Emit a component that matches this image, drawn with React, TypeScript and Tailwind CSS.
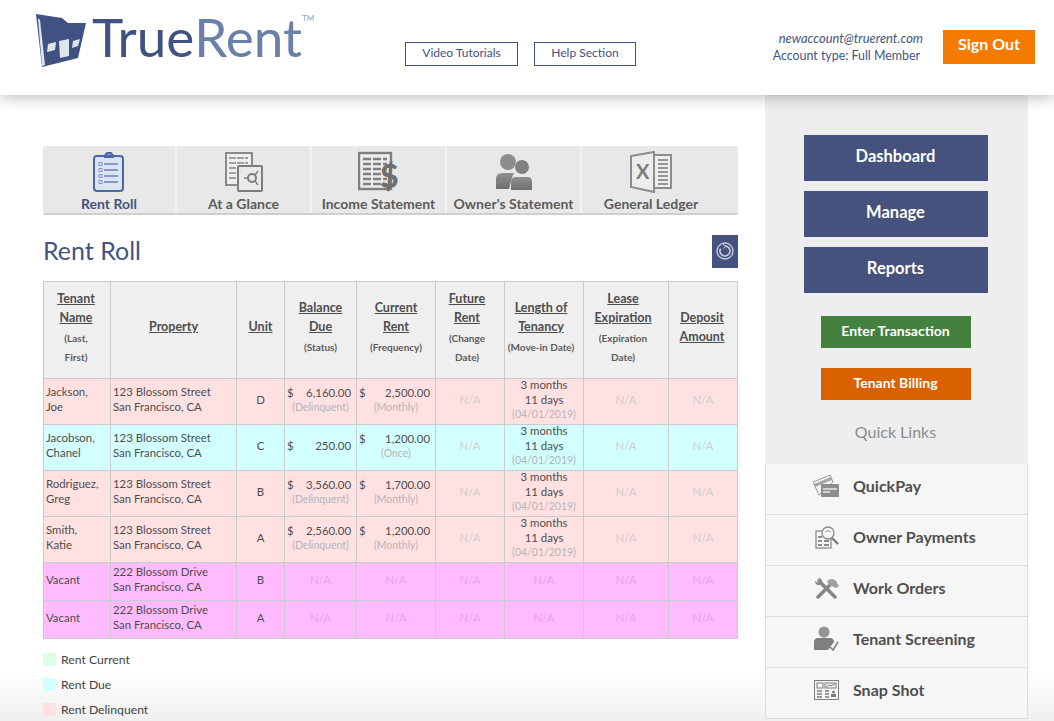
const font = "font-['Lato','Open_Sans',sans-serif]"

function LogoMark() {
  return (
    <svg width="50" height="54" viewBox="0 0 50 54" className="shrink-0">
      <path d="M0 0 L26 4 L32 9 L50 9 L42 44 L6 53 Z" fill="#3f5282" />
      <path d="M2 4 L4 6 L9 51 L6 52 Z" fill="#dfe5ee" />
      <path d="M12 30 L20 28 L19 36 L11 38 Z" fill="#dfe5ee" />
      <path d="M23 27 L33 25 L33 42 L24 44 Z" fill="#dfe5ee" />
      <path d="M37 27 L44 25 L42 32 L36 34 Z" fill="#dfe5ee" />
    </svg>
  )
}

function RentRollIcon() {
  return (
    <svg width="32" height="40" viewBox="0 0 32 40">
      <path d="M12 4 L14 1 H18 L20 4 H27 Q30 4 30 7 V36 Q30 39 27 39 H4 Q1 39 1 36 V7 Q1 4 4 4 Z" fill="#dde4f1" stroke="#4a68a8" strokeWidth="2" />
      <rect x="11" y="2.5" width="10" height="3.5" fill="#4a68a8" />
      {[12, 18, 24, 30].map((y) => (
        <g key={y}>
          <rect x="6" y={y - 1.5} width="3" height="3" fill="none" stroke="#6c86bb" strokeWidth="0.8" />
          <path d={`M11 ${y} H25`} stroke="#4a68a8" strokeWidth="1.2" />
        </g>
      ))}
    </svg>
  )
}

function GlanceIcon() {
  return (
    <svg width="38" height="40" viewBox="0 0 38 40">
      <rect x="1" y="1" width="26" height="32" fill="#eee" stroke="#8a8a8a" strokeWidth="2" />
      {[6, 11, 16, 21, 26].map((y) => (
        <path key={y} d={`M4 ${y} H23`} stroke="#a0a0a0" strokeWidth="2" strokeDasharray="7 1" />
      ))}
      <rect x="13" y="14" width="24" height="25" rx="1" fill="#e9e9e9" stroke="#7d7d7d" strokeWidth="2" />
      <circle cx="27" cy="26" r="4" fill="none" stroke="#7d7d7d" strokeWidth="2" />
      <path d="M19 26 H23 M30 23 L33 19 M30 29 L33 33" stroke="#7d7d7d" strokeWidth="1.5" />
    </svg>
  )
}

function IncomeIcon() {
  return (
    <svg width="42" height="46" viewBox="0 0 42 46">
      <g transform="translate(0 3)">
        <rect x="1" y="1" width="32" height="36" fill="#ececec" stroke="#7f7f7f" strokeWidth="2.4" />
        {[7, 12, 17, 22, 27, 32].map((y) => (
          <path key={y} d={`M5 ${y} H29`} stroke="#808080" strokeWidth="2.4" strokeDasharray="8 2" />
        ))}
        <text x="22" y="36" fontSize="32" fontWeight="900" fill="#6f6f6f" fontFamily="Lato, sans-serif">$</text>
      </g>
    </svg>
  )
}

function OwnerIcon() {
  return (
    <svg width="38" height="38" viewBox="0 0 38 38">
      <defs>
        <linearGradient id="own" x1="0" y1="0" x2="0" y2="1">
          <stop offset="0" stopColor="#8f8f8f" />
          <stop offset="1" stopColor="#6f6f6f" />
        </linearGradient>
      </defs>
      <circle cx="13" cy="9" r="8" fill="#8d8d8d" />
      <path d="M1 36 V26 Q1 20 7 20 H19 Q17 24 16 28 L14 36 Z" fill="url(#own)" />
      <circle cx="27" cy="14" r="7" fill="#808080" />
      <path d="M16 37 V29 Q16 24 21 24 H33 Q37 24 37 29 V37 Z" fill="url(#own)" />
    </svg>
  )
}

function ExcelIcon() {
  return (
    <svg width="42" height="42" viewBox="0 0 42 42">
      <rect x="24" y="4" width="17" height="33" fill="#eee" stroke="#8c8c8c" strokeWidth="2" />
      {[9, 13, 17, 21, 25, 29, 33].map((y) => (
        <path key={y} d={`M28 ${y} H38`} stroke="#8c8c8c" strokeWidth="1.8" />
      ))}
      <path d="M1 5 L24 1 V41 L1 36 Z" fill="#ececec" stroke="#8c8c8c" strokeWidth="2" />
      <text x="6" y="28" fontSize="20" fontWeight="700" fill="#7d7d7d" fontFamily="Lato, sans-serif">X</text>
    </svg>
  )
}

function PayIcon() {
  return (
    <svg width="26" height="22" viewBox="0 0 26 22">
      <path d="M0 7 L17 0 L20 7 L6 20 Z" fill="#f4f4f4" stroke="#9a9a9a" />
      <path d="M1 9 L18 2 L19 5 L2 12 Z" fill="#a5a5a5" />
      <rect x="8" y="9" width="18" height="13" fill="#8d8d8d" />
      <path d="M10 14 H24 M10 17 H17" stroke="#e8e8e8" strokeWidth="1.3" />
    </svg>
  )
}

function PaymentsIcon() {
  return (
    <svg width="24" height="23" viewBox="0 0 24 23">
      <rect x="1" y="5" width="15" height="17" fill="#f4f4f4" stroke="#8c8c8c" strokeWidth="1.3" />
      <path d="M3 11 H7 M9 11 H14 M3 15 H7 M9 15 H14 M3 19 H7 M9 19 H14" stroke="#8c8c8c" strokeWidth="2" />
      <circle cx="13" cy="7" r="6" fill="#f6f6f6" stroke="#8c8c8c" strokeWidth="1.3" />
      <path d="M10 6 Q13 3 16 6" fill="none" stroke="#9a9a9a" />
      <path d="M17 12 L23 18" stroke="#7d7d7d" strokeWidth="2.4" />
    </svg>
  )
}

function ToolsIcon() {
  return (
    <svg width="25" height="21" viewBox="0 0 25 21">
      <path d="M5 3 L21 19" stroke="#858585" strokeWidth="3.4" strokeLinecap="round" />
      <path d="M1 3 L4 5 L6 3 L4 0 Q8 0 8 4 Q8 7 5 7 Q1 7 1 3 Z" fill="#858585" />
      <path d="M18 5 L4 19" stroke="#858585" strokeWidth="3.4" strokeLinecap="round" />
      <path d="M13 3 Q18 -1 22 3 L25 8 L22 10 L18 8 L15 7 Z" fill="#a0a0a0" />
    </svg>
  )
}

function ScreeningIcon() {
  return (
    <svg width="26" height="26" viewBox="0 0 26 26">
      <circle cx="11" cy="6" r="5.5" fill="#949494" />
      <path d="M1 24 V16 Q1 12 5 12 H17 Q21 12 21 16 L15 24 Z" fill="#7f7f7f" />
      <path d="M17 21 L20 24 L25 16" fill="none" stroke="#808080" strokeWidth="1.6" />
    </svg>
  )
}

function SnapIcon() {
  return (
    <svg width="25" height="20" viewBox="0 0 25 20">
      <rect x="0.5" y="0.5" width="24" height="19" fill="#f6f6f6" stroke="#7d7d7d" />
      <rect x="3" y="3" width="6" height="5" fill="none" stroke="#7d7d7d" />
      <rect x="11" y="3" width="11" height="5" fill="none" stroke="#7d7d7d" />
      <path d="M12 7 L15 5 L17 6 L21 4" fill="none" stroke="#7d7d7d" />
      <path d="M3 11 H8 M3 14 H8 M3 17 H8 M11 11 H15 M11 14 H15 M11 17 H15" stroke="#7d7d7d" strokeWidth="1.6" />
      <circle cx="19.5" cy="12" r="1.5" fill="#7d7d7d" />
      <rect x="17" y="14" width="5" height="3" fill="#7d7d7d" />
    </svg>
  )
}

function RefreshIcon() {
  return (
    <svg width="18" height="18" viewBox="0 0 18 18" fill="none" stroke="#c9cddb">
      <circle cx="9" cy="9" r="8" strokeWidth="1.3" />
      <path d="M9 4 A5 5 0 1 1 4.6 6.6" strokeWidth="1.6" />
      <path d="M7 2.5 L10 4.2 L7.5 6.5" strokeWidth="1" />
    </svg>
  )
}

const tabs = [
  { label: 'Rent Roll', icon: <RentRollIcon />, width: 'w-[134px]', color: 'text-[#44547f]' },
  { label: 'At a Glance', icon: <GlanceIcon />, width: 'w-[135px]', color: 'text-[#5c5c5c]' },
  { label: 'Income Statement', icon: <IncomeIcon />, width: 'w-[135px]', color: 'text-[#5c5c5c]' },
  { label: "Owner's Statement", icon: <OwnerIcon />, width: 'w-[135px]', color: 'text-[#5c5c5c]' },
  { label: 'General Ledger', icon: <ExcelIcon />, width: 'flex-1 pr-[18px]', color: 'text-[#5c5c5c]' },
]

const columns = [
  { title: ['Tenant', 'Name'], sub: ['(Last,', 'First)'], width: 'w-[67px] pb-[4px] pr-[2px]' },
  { title: ['Property'], sub: [], width: 'w-[126px] pb-[7px]' },
  { title: ['Unit'], sub: [], width: 'w-[48px] pb-[7px]' },
  { title: ['Balance', 'Due'], sub: ['(Status)'], width: 'w-[72px] pb-[5px]' },
  { title: ['Current', 'Rent'], sub: ['(Frequency)'], width: 'w-[79px] pb-[5px]' },
  { title: ['Future', 'Rent'], sub: ['(Change', 'Date)'], width: 'w-[69px] pb-[4px] pr-[6px]' },
  { title: ['Length of', 'Tenancy'], sub: ['(Move-in Date)'], width: 'w-[79px] pb-[5px] pr-[6px]' },
  { title: ['Lease', 'Expiration'], sub: ['(Expiration', 'Date)'], width: 'w-[85px] pb-[4px] pr-[6px]' },
  { title: ['Deposit', 'Amount'], sub: [], width: 'w-[69px] pb-[6px] pr-[2px]' },
]

const rows = [
  { name: ['Jackson,', 'Joe'], street: '123 Blossom Street', unit: 'D', balance: '6,160.00', status: '(Delinquent)', rent: '2,500.00', freq: '(Monthly)', bg: 'bg-[#ffe1e2]' },
  { name: ['Jacobson,', 'Chanel'], street: '123 Blossom Street', unit: 'C', balance: '250.00', status: '', rent: '1,200.00', freq: '(Once)', bg: 'bg-[#d2ffff]' },
  { name: ['Rodriguez,', 'Greg'], street: '123 Blossom Street', unit: 'B', balance: '3,560.00', status: '(Delinquent)', rent: '1,700.00', freq: '(Monthly)', bg: 'bg-[#ffe1e2]' },
  { name: ['Smith,', 'Katie'], street: '123 Blossom Street', unit: 'A', balance: '2,560.00', status: '(Delinquent)', rent: '1,200.00', freq: '(Monthly)', bg: 'bg-[#ffe1e2]' },
]

const vacant = [
  { street: '222 Blossom Drive', unit: 'B' },
  { street: '222 Blossom Drive', unit: 'A' },
]

const links = [
  { label: 'QuickPay', icon: <PayIcon /> },
  { label: 'Owner Payments', icon: <PaymentsIcon /> },
  { label: 'Work Orders', icon: <ToolsIcon /> },
  { label: 'Tenant Screening', icon: <ScreeningIcon /> },
  { label: 'Snap Shot', icon: <SnapIcon /> },
]

const cell = 'border border-[#cbcbcb] align-middle p-0 leading-[15px]'

function Money({ amount, note }: { amount: string; note: string }) {
  return (
    <td className={`${cell} px-[2px]`}>
      <div className="-translate-y-[2px]">
        <div className="flex justify-between pr-[3px]">
          <span>$</span>
          <span>{amount}</span>
        </div>
        {note && <div className="text-center text-[10.5px] text-[#b5b5b5]">{note}</div>}
      </div>
    </td>
  )
}

function Na() {
  return (
    <td className={`${cell} text-center text-[#cfcfcf]`}>
      <div className="-translate-y-[2px]">N/A</div>
    </td>
  )
}

function Tenancy() {
  return (
    <td className={`${cell} text-center`}>
      <div className="-translate-y-[2px]">
        <div>3 months</div>
        <div>11 days</div>
        <div className="text-[10.5px] text-[#b5b5b5]">(04/01/2019)</div>
      </div>
    </td>
  )
}

function Address({ street }: { street: string }) {
  return (
    <td className={`${cell} pl-[2px]`}>
      <div className="-translate-y-[3px]">
        <div>{street}</div>
        <div>San Francisco, CA</div>
      </div>
    </td>
  )
}

export default function App() {
  return (
    <div className={`${font} h-screen overflow-hidden bg-[linear-gradient(to_bottom,#ffffff_670px,#efefef)]`}>
      {/* Header */}
      <header className="relative z-10 flex h-[95px] bg-white shadow-[0_2px_14px_rgba(0,0,0,0.28)]">
        <div className="flex w-[405px] items-start pl-[36px] pt-[14px]">
          <LogoMark />
          <div className="ml-[6px] -mt-[8px] flex text-[53px] font-normal leading-[62px]">
            <span className="text-[#3f5282]">True</span>
            <span className="text-[#6a80aa]">Rent</span>
            <span className="text-[8px] leading-[24px] text-[#8fa0bf]">TM</span>
          </div>
        </div>
        <div className="flex gap-4 pt-[42px]">
          <a className="flex h-6 w-[113px] items-center justify-center border border-[#3f5282] pb-[2px] text-[12px] text-[#3f5282]">Video Tutorials</a>
          <a className="flex h-6 w-[102px] items-center justify-center border border-[#3f5282] pb-[2px] text-[12px] text-[#3f5282]">Help Section</a>
        </div>
        <div className="ml-auto flex items-start pr-[19px] pt-[30px]">
          <div className="pr-[20px] text-right leading-[18px] text-[#44547f]">
            <div className="-mt-[1px] text-[12.9px] italic">newaccount@truerent.com</div>
            <div className="pr-[3px] text-[12.4px]">Account type: Full Member</div>
          </div>
          <button className="h-[34px] w-[92px] bg-[#f57a00] pb-[7px] text-[16px] font-bold text-white">Sign Out</button>
        </div>
      </header>

      <div className="flex">
        {/* Main */}
        <main className="w-[765px] pl-[43px] pr-[27px] pt-[51px]">
          <div className="flex h-[69px] rounded-[2px] border-b-2 border-[#cfcfcf] bg-[#e8e8e8]">
            {tabs.map((t) => (
              <div key={t.label} className={`${t.width} flex flex-col items-center justify-between border-r-2 border-[#f2f2f2] pb-[1px] pt-[5px] last:border-r-0`}>
                <div className="flex h-[42px] items-center">{t.icon}</div>
                <span className={`${t.color} whitespace-nowrap text-[14px] font-bold leading-[16px]`}>{t.label}</span>
              </div>
            ))}
          </div>

          <div className="mb-[7px] mt-[13px] flex h-[46px] items-center justify-between">
            <h1 className="text-[25px] font-normal text-[#44547f]">Rent Roll</h1>
            <div className="flex h-[33px] w-[26px] items-center justify-center bg-[#44527d]">
              <RefreshIcon />
            </div>
          </div>

          <table className="w-[695px] table-fixed border-collapse text-[11.4px] text-[#4d4d4d]">
            <thead>
              <tr className="h-[97px] bg-[#efefef]">
                {columns.map((c) => (
                  <th key={c.title[0]} className={`${c.width} border border-[#cbcbcb] px-0 pt-0 text-center align-middle font-bold`}>
                    {c.title.map((line) => (
                      <div key={line} className="text-[12.5px] leading-[19px] underline">{line}</div>
                    ))}
                    {c.sub.length > 0 && (
                      <div className="mt-[2px]">
                        {c.sub.map((line) => (
                          <div key={line} className="whitespace-nowrap text-[10px] leading-[19px] text-[#5c5c5c]">{line}</div>
                        ))}
                      </div>
                    )}
                  </th>
                ))}
              </tr>
            </thead>
            <tbody>
              {rows.map((r) => (
                <tr key={r.name[0]} className={`${r.bg} h-[46px]`}>
                  <td className={`${cell} pl-[2px]`}>
                    <div className="-translate-y-[3px]">
                      <div>{r.name[0]}</div>
                      <div>{r.name[1]}</div>
                    </div>
                  </td>
                  <Address street={r.street} />
                  <td className={`${cell} text-center`}>
                    <div className="-translate-y-[2px]">{r.unit}</div>
                  </td>
                  <Money amount={r.balance} note={r.status} />
                  <Money amount={r.rent} note={r.freq} />
                  <Na />
                  <Tenancy />
                  <Na />
                  <Na />
                </tr>
              ))}
              {vacant.map((r) => (
                <tr key={r.unit} className="h-[38px] bg-[#ffbbff]">
                  <td className={`${cell} pl-[2px]`}>
                    <div className="-translate-y-[2px]">Vacant</div>
                  </td>
                  <Address street={r.street} />
                  <td className={`${cell} text-center`}>
                    <div className="-translate-y-[2px]">{r.unit}</div>
                  </td>
                  {[0, 1, 2, 3, 4, 5].map((i) => (
                    <td key={i} className={`${cell} text-center text-[#e3a8e6]`}>
                      <div className="-translate-y-[2px]">N/A</div>
                    </td>
                  ))}
                </tr>
              ))}
            </tbody>
          </table>

          <div className="mt-[14px] flex flex-col gap-[12px] text-[12.2px] leading-[13px] text-[#444]">
            {[
              { label: 'Rent Current', color: 'bg-[#dcffe4]' },
              { label: 'Rent Due', color: 'bg-[#d2ffff]' },
              { label: 'Rent Delinquent', color: 'bg-[#ffe1e2]' },
            ].map((l) => (
              <div key={l.label} className="flex items-center gap-[5px]">
                <span className={`${l.color} h-[13px] w-[13px]`} />
                {l.label}
              </div>
            ))}
          </div>
        </main>

        {/* Sidebar */}
        <aside className="w-[263px] bg-[#eeeeee]">
          <div className="flex flex-col items-center pr-[2px] pt-[40px]">
            {['Dashboard', 'Manage', 'Reports'].map((b) => (
              <button key={b} className="mb-[10px] h-[46px] w-[184px] bg-[#44527d] pb-[4px] text-[16.5px] font-bold text-white">{b}</button>
            ))}
            <button className="mt-[13px] h-[32px] w-[150px] bg-[#44803e] pb-[4px] text-[14px] font-bold text-white">Enter Transaction</button>
            <button className="mt-[20px] h-[32px] w-[150px] bg-[#d96100] pb-[4px] text-[14px] font-bold text-white">Tenant Billing</button>
            <div className="mt-[20px] h-[44px] text-[16px] leading-[24px] text-[#8c8c8c]">Quick Links</div>
          </div>
          <ul className="border-l border-r border-[#dedede]">
            {links.map((l) => (
              <li key={l.label} className="flex h-[51px] items-center border-b border-[#dddddd] bg-[#f6f6f6] pb-[6px]">
                <span className="flex w-[87px] justify-end pr-[14px]">{l.icon}</span>
                <span className="text-[16px] font-bold text-[#4f4f4f]">{l.label}</span>
              </li>
            ))}
          </ul>
        </aside>
      </div>
    </div>
  )
}
